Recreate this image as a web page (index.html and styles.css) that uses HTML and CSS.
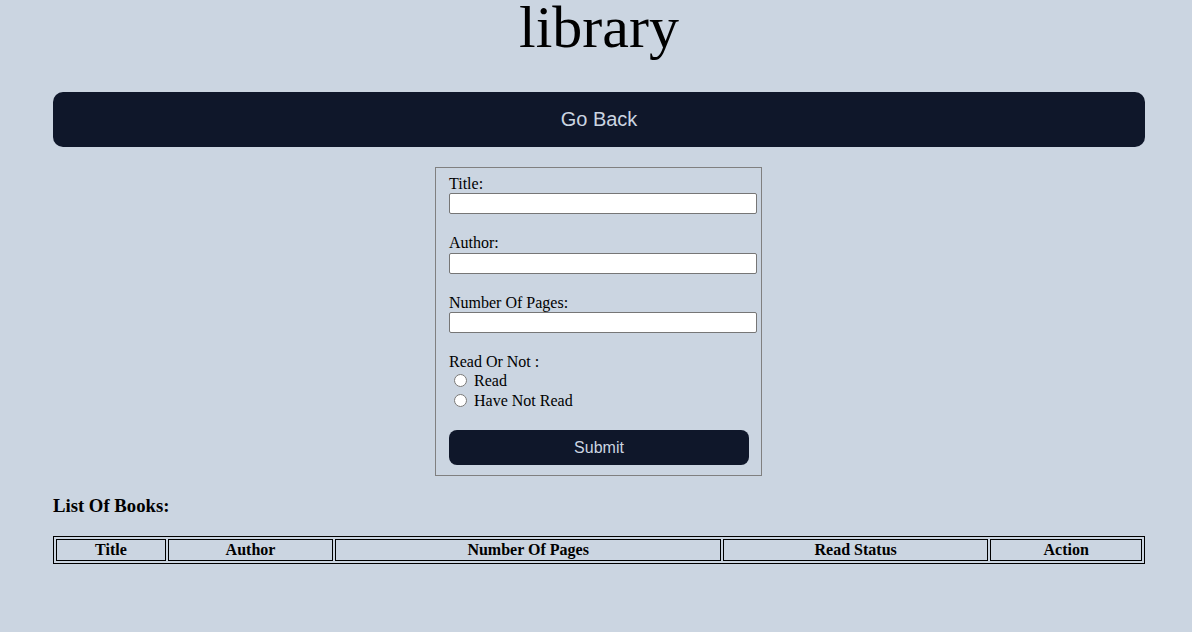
FILE: index.html
```html
<!DOCTYPE html>
<html>
<head>
<meta charset="utf-8">
<link rel="stylesheet" href="styles.css">
</head>
<body>
<div class="page">
  <h1 class="title">library</h1>
  <button class="back">Go Back</button>
  <form class="book-form">
    <label class="field-label" for="title">Title:</label>
    <input class="text-input" id="title" type="text">
    <label class="field-label" for="author">Author:</label>
    <input class="text-input" id="author" type="text">
    <label class="field-label" for="pages">Number Of Pages:</label>
    <input class="text-input" id="pages" type="text">
    <div class="group-label">Read Or Not :</div>
    <div class="radio-row"><input type="radio" name="read" id="r1"> <label for="r1">Read</label></div>
    <div class="radio-row"><input type="radio" name="read" id="r2"> <label for="r2">Have Not Read</label></div>
    <button type="button" class="submit">Submit</button>
  </form>
  <h3 class="list-heading">List Of Books:</h3>
  <table class="books">
    <thead>
      <tr>
        <th>Title</th>
        <th>Author</th>
        <th>Number Of Pages</th>
        <th>Read Status</th>
        <th>Action</th>
      </tr>
    </thead>
    <tbody></tbody>
  </table>
</div>
</body>
</html>
```
FILE: styles.css
```css
html, body {
  margin: 0;
  padding: 0;
  background: #cbd5e1;
  font-family: "Liberation Serif", "Times New Roman", serif;
  font-size: 16px;
  color: #000;
}
.page {
  display: flex;
  flex-direction: column;
  padding: 0 47px 0 53px;
}
.title {
  margin: 0;
  font-weight: normal;
  font-size: 60px;
  line-height: 54px;
  height: 54px;
  text-align: center;
}
.back {
  margin-top: 38px;
  height: 55px;
  border: none;
  border-radius: 10px;
  background: #0f172a;
  color: #cbd5e1;
  font-family: "Liberation Sans", Arial, sans-serif;
  font-size: 20px;
  padding: 0;
}
.book-form {
  align-self: center;
  margin-top: 20px;
  margin-right: 1px;
  width: 327px;
  box-sizing: border-box;
  border: 1px solid #808080;
  padding: 7px 4px 10px 13px;
  display: flex;
  flex-direction: column;
  align-items: flex-start;
}
.field-label {
  display: block;
  line-height: 18.4px;
  height: 18.4px;
}
.group-label {
  line-height: 18px;
  height: 18px;
}
.text-input {
  width: 308px;
  height: 21px;
  box-sizing: border-box;
  margin: 0 0 20px 0;
  border: 1px solid #767676;
  border-radius: 2px;
  background: #fff;
  padding: 1px 2px;
}
.radio-row {
  height: 20px;
  line-height: 20px;
}
.radio-row input {
  margin: 3px 3px 0 5px;
  vertical-align: -1px;
}
.submit {
  margin-top: 19px;
  width: 300px;
  height: 35px;
  border: none;
  border-radius: 8px;
  background: #0f172a;
  color: #cbd5e1;
  font-family: "Liberation Sans", Arial, sans-serif;
  font-size: 16px;
  padding: 0;
}
.list-heading {
  margin: 19px 0 19px;
  font-size: 1.17em;
  font-weight: bold;
}
.books {
  width: 100%;
  border: 1px solid #000;
  border-spacing: 2px;
}
.books th {
  border: 1px solid #000;
  padding: 1px;
  font-weight: bold;
}
```
